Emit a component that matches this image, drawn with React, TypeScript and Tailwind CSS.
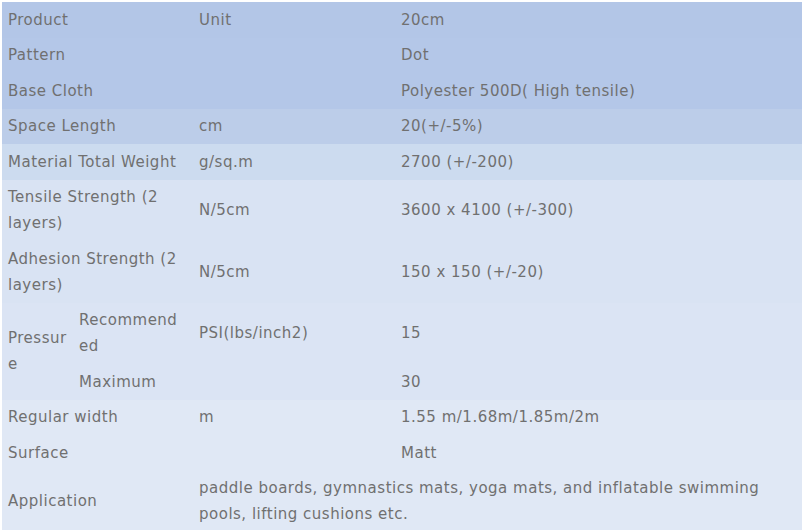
import React from 'react';

type Row = {
  label: string;
  unit?: string;
  value: string;
  bg: string;
};

const topRows: Row[] = [
  { label: 'Product', unit: 'Unit', value: '20cm', bg: 'bg-[#b3c6e7]' },
  { label: 'Pattern', value: 'Dot', bg: 'bg-[#b4c7e8]' },
  { label: 'Base Cloth', value: 'Polyester 500D( High tensile)', bg: 'bg-[#b4c7e8]' },
  { label: 'Space Length', unit: 'cm', value: '20(+/-5%)', bg: 'bg-[#bccde9]' },
  { label: 'Material Total Weight', unit: 'g/sq.m', value: '2700 (+/-200)', bg: 'bg-[#ccdbef]' },
  { label: 'Tensile Strength (2 layers)', unit: 'N/5cm', value: '3600 x 4100 (+/-300)', bg: 'bg-[#d9e3f3]' },
  { label: 'Adhesion Strength (2 layers)', unit: 'N/5cm', value: '150 x 150 (+/-20)', bg: 'bg-[#d9e3f3]' },
];

const bottomRows: Row[] = [
  { label: 'Regular width', unit: 'm', value: '1.55 m/1.68m/1.85m/2m', bg: 'bg-[#e0e8f5]' },
  { label: 'Surface', value: 'Matt', bg: 'bg-[#e0e8f5]' },
];

const cell = 'px-[6px] py-[4.75px] align-middle break-words';

function SpecRow({ row }: { row: Row }) {
  return (
    <tr className={row.bg}>
      <td colSpan={2} className={cell}>{row.label}</td>
      <td className={cell}>{row.unit ?? ''}</td>
      <td className={cell}>{row.value}</td>
    </tr>
  );
}

export default function App() {
  return (
    <div
      className="bg-white pt-[2px] pl-[2px] w-[802px] h-[530px] overflow-hidden text-[15px] leading-[26px] tracking-[0.5px] text-[#707070]"
      style={{ fontFamily: '"DejaVu Sans", sans-serif' }}
    >
      <table className="table-fixed border-collapse w-[800px]">
        <colgroup>
          <col className="w-[71px]" />
          <col className="w-[120px]" />
          <col className="w-[202px]" />
          <col />
        </colgroup>
        <tbody>
          {topRows.map((r) => (
            <SpecRow key={r.label} row={r} />
          ))}
          <tr className="bg-[#dbe4f4]">
            <td rowSpan={2} className={cell}>Pressure</td>
            <td className={cell}>Recommended</td>
            <td className={cell}>PSI(lbs/inch2)</td>
            <td className={cell}>15</td>
          </tr>
          <tr className="bg-[#dbe4f4]">
            <td className={cell}>Maximum</td>
            <td className={cell}></td>
            <td className={cell}>30</td>
          </tr>
          {bottomRows.map((r) => (
            <SpecRow key={r.label} row={r} />
          ))}
          <tr className="bg-[#e0e8f5]">
            <td colSpan={2} className={cell}>Application</td>
            <td colSpan={2} className={cell}>
              paddle boards, gymnastics mats, yoga mats, and inflatable swimming pools, lifting cushions etc.
            </td>
          </tr>
        </tbody>
      </table>
    </div>
  );
}
